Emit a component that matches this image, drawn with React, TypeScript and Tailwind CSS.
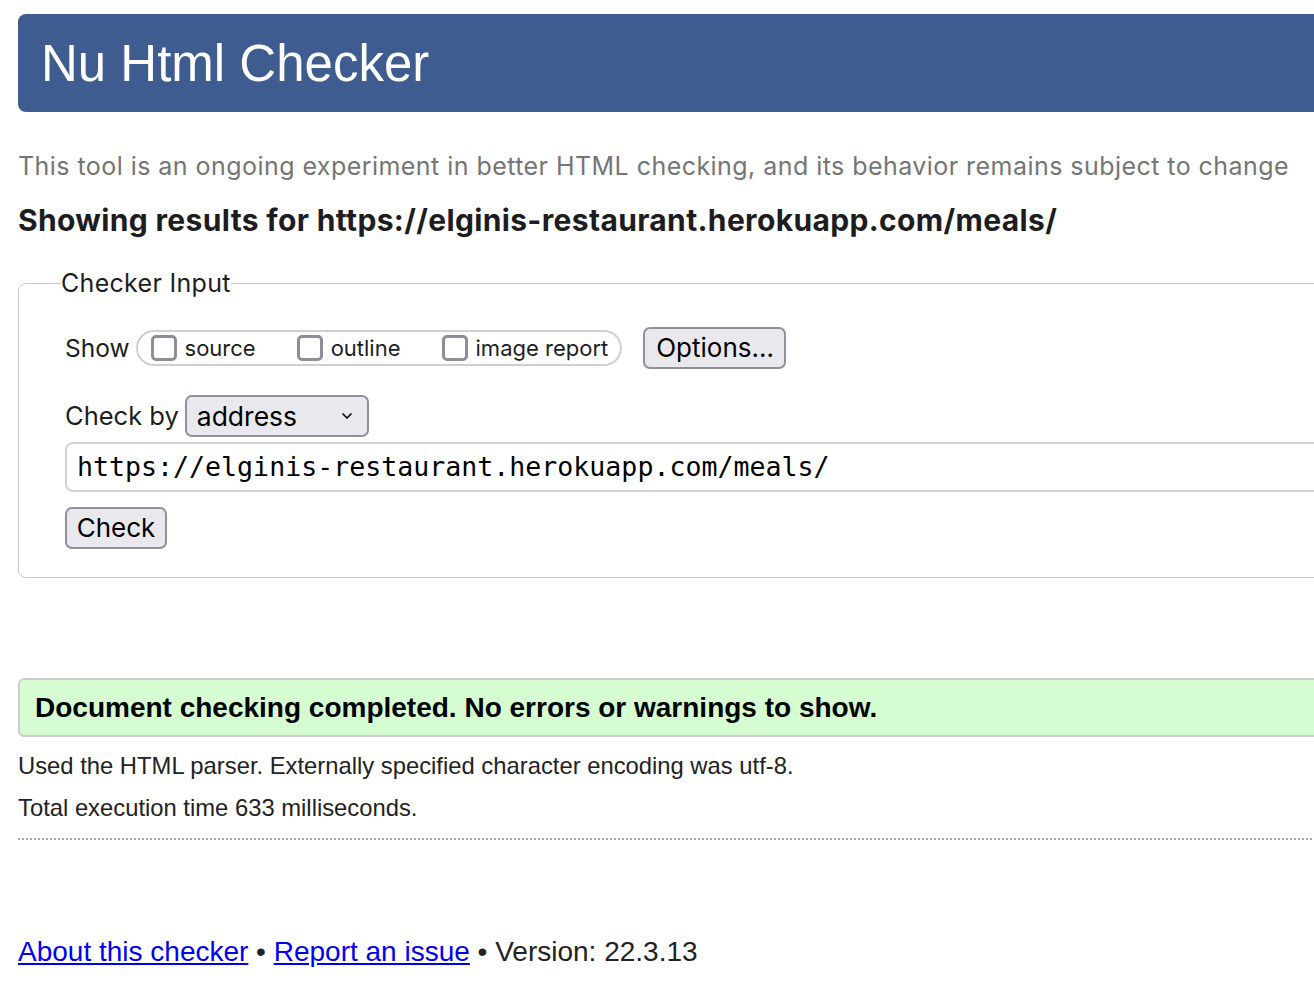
import { ChevronDown } from 'lucide-react'

const helv = "font-['Liberation_Sans',Arial,sans-serif]"
const sys = "font-['Inter','Noto_Sans',sans-serif]"

const showOptions = ['source', 'outline', 'image report']

function Checkbox({ label }: { label: string }) {
  return (
    <label className="flex items-center">
      <span className="w-[26px] h-[26px] rounded-[5px] border-[3px] border-[#8e8e98] bg-white" />
      <span className="ml-[8px] text-[22px] text-[#1d1d1f] leading-none">{label}</span>
    </label>
  )
}

export default function App() {
  return (
    <div className="w-full min-h-screen bg-white overflow-hidden">
      <div className="w-[1420px] pl-[18px] pt-[14px]">
        {/* Header */}
        <header className="h-[98px] rounded-[8px] bg-[#3e5c8f] flex items-center pl-[23px]">
          <h1 className={`${helv} text-[51px] text-white leading-none`}>Nu Html Checker</h1>
        </header>

        <p className={`${sys} mt-[38px] text-[25px] tracking-[0.45px] leading-[32px] text-[#757575]`}>
          This tool is an ongoing experiment in better HTML checking, and its behavior remains subject to change
        </p>
        <h2 className={`${sys} mt-[20px] text-[30px] tracking-[0.35px] leading-[36px] font-bold text-[#1d1d1f]`}>
          Showing results for https://elginis-restaurant.herokuapp.com/meals/
        </h2>

        {/* Checker input */}
        <fieldset className={`${sys} mt-[30px] border border-[#c8c8c8] rounded-[8px] pl-[42px] pb-[28px]`}>
          <legend className="text-[25px] tracking-[0.3px] leading-[30px] text-[#1d1d1f]">Checker Input</legend>
          <div className="ml-[4px] pt-[29px]">
            <div className="flex items-center h-[42px]">
              <span className="text-[24.5px] text-[#1d1d1f]">Show</span>
              <div className="ml-[6px] h-[36px] rounded-full border-2 border-[#cfcfcf] flex items-center gap-[41px] pl-[13px] pr-[12px]">
                {showOptions.map(o => (
                  <Checkbox key={o} label={o} />
                ))}
              </div>
              <button className="ml-[21px] h-[42px] w-[143px] pl-[11px] text-left rounded-[7px] border-2 border-[#8f8f9d] bg-[#e9e9ed] text-[26px] text-black leading-none">
                Options…
              </button>
            </div>

            <div className="flex items-center h-[42px] mt-[26px]">
              <span className="text-[25.5px] text-[#1d1d1f]">Check by</span>
              <div className="ml-[6px] w-[184px] h-[42px] rounded-[7px] border-2 border-[#8f8f9d] bg-[#e9e9ed] flex items-center justify-between pl-[10px] pr-[12px]">
                <span className="text-[26.5px] text-black leading-none">address</span>
                <ChevronDown size={16} strokeWidth={2.5} className="text-black" />
              </div>
            </div>

            <div className="mt-[5px] mr-[60px] h-[50px] rounded-[8px] border-2 border-[#d2d2d2] flex items-center px-[10px]">
              <span className="font-['DejaVu_Sans_Mono',monospace] text-[26.6px] text-black leading-none">
                https://elginis-restaurant.herokuapp.com/meals/
              </span>
            </div>

            <button className="mt-[15px] h-[42px] w-[102px] rounded-[7px] border-2 border-[#8f8f9d] bg-[#e9e9ed] text-[26px] text-black leading-none">
              Check
            </button>
          </div>
        </fieldset>

        {/* Result */}
        <div className="mt-[100px] h-[59px] rounded-[6px] border-2 border-[#cccccc] bg-[#d6fcd2] flex items-center pl-[15px]">
          <p className={`${helv} text-[28px] font-bold text-black leading-none`}>
            Document checking completed. No errors or warnings to show.
          </p>
        </div>

        <div className={`${helv} text-[23.8px] text-[#222] leading-[28px]`}>
          <p className="mt-[15px]">Used the HTML parser. Externally specified character encoding was utf-8.</p>
          <p className="mt-[14px]">Total execution time 633 milliseconds.</p>
        </div>
        <hr className="mt-[16px] border-0 border-t-2 border-dotted border-[#aaaaaa]" />

        <p className={`${helv} mt-[97px] text-[28px] leading-[30px] text-[#222]`}>
          <a href="#" className="text-[#0000ee] underline">About this checker</a>
          {' • '}
          <a href="#" className="text-[#0000ee] underline">Report an issue</a>
          {' • Version: 22.3.13'}
        </p>
      </div>
    </div>
  )
}
